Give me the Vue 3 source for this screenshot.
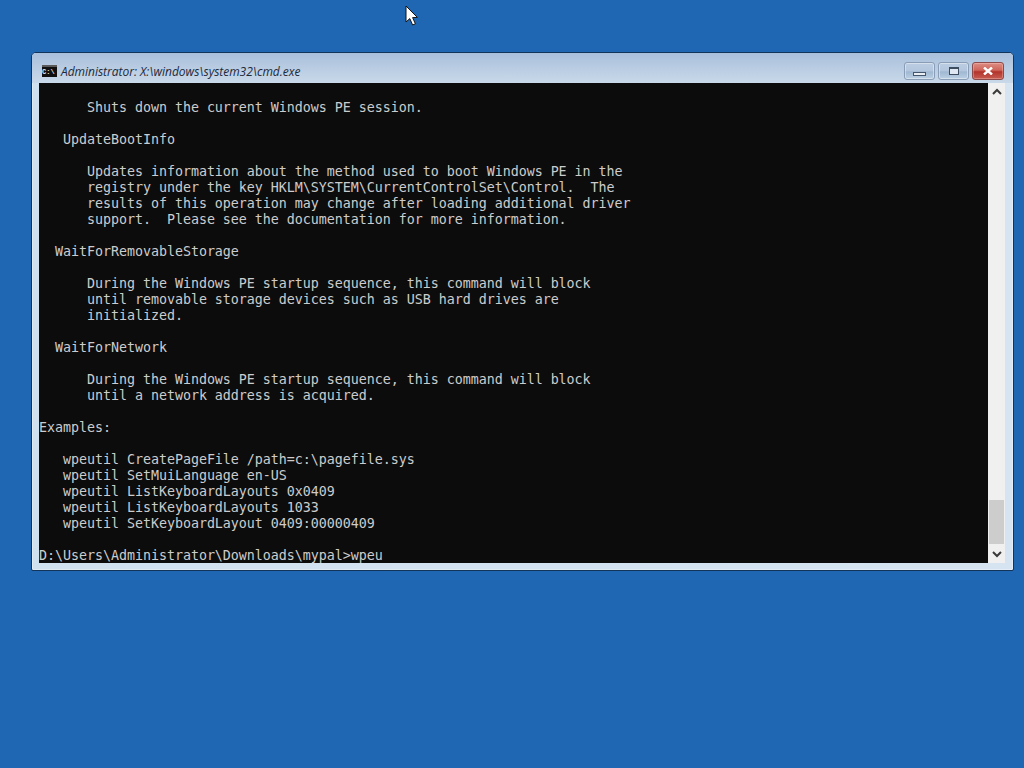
<script setup>
const lines = [
  '',
  '      Shuts down the current Windows PE session.',
  '',
  '   UpdateBootInfo',
  '',
  '      Updates information about the method used to boot Windows PE in the',
  '      registry under the key HKLM\\SYSTEM\\CurrentControlSet\\Control.  The',
  '      results of this operation may change after loading additional driver',
  '      support.  Please see the documentation for more information.',
  '',
  '  WaitForRemovableStorage',
  '',
  '      During the Windows PE startup sequence, this command will block',
  '      until removable storage devices such as USB hard drives are',
  '      initialized.',
  '',
  '  WaitForNetwork',
  '',
  '      During the Windows PE startup sequence, this command will block',
  '      until a network address is acquired.',
  '',
  'Examples:',
  '',
  '   wpeutil CreatePageFile /path=c:\\pagefile.sys',
  '   wpeutil SetMuiLanguage en-US',
  '   wpeutil ListKeyboardLayouts 0x0409',
  '   wpeutil ListKeyboardLayouts 1033',
  '   wpeutil SetKeyboardLayout 0409:00000409',
  '',
  'D:\\Users\\Administrator\\Downloads\\mypal>wpeu',
]
</script>

<template>
  <div class="desktop">
    <svg class="cursor" width="14" height="22" viewBox="0 0 14 22">
      <path d="M1 1 L1 17 L4.8 13.6 L7.6 20 L10.4 18.8 L7.6 12.6 L12.4 12.4 Z" fill="#fff" stroke="#10151c" stroke-width="1" />
    </svg>
    <section class="window">
      <header class="titlebar">
        <div class="appicon">C:\</div>
        <div class="title">Administrator: X:\windows\system32\cmd.exe</div>
        <div class="controls">
          <div class="btn min"><span class="glyph-min"></span></div>
          <div class="btn max"><span class="glyph-max"></span></div>
          <div class="btn close">
            <svg width="10" height="8" viewBox="0 0 10 8"><path d="M1 0.5 L9 7.5 M9 0.5 L1 7.5" stroke="#fff" stroke-width="2.4" /></svg>
          </div>
        </div>
      </header>
      <div class="client">
        <div class="console">
          <div v-for="(line, i) in lines" :key="i" class="row">{{ line }}</div>
        </div>
        <div class="scrollbar">
          <div class="arrow">
            <svg width="10" height="7" viewBox="0 0 10 7"><path d="M1 6 L5 2 L9 6" fill="none" stroke="#3a3a3a" stroke-width="2" /></svg>
          </div>
          <div class="track"><div class="thumb"></div></div>
          <div class="arrow">
            <svg width="10" height="7" viewBox="0 0 10 7"><path d="M1 1 L5 5 L9 1" fill="none" stroke="#3a3a3a" stroke-width="2" /></svg>
          </div>
        </div>
      </div>
    </section>
  </div>
</template>

<style>
html, body { margin: 0; background: #1f67b2; }
</style>

<style scoped>
.desktop {
  position: relative;
  width: 1024px;
  height: 768px;
  overflow: hidden;
  background: #1f67b2;
}
.cursor {
  position: absolute;
  left: 405px;
  top: 5px;
}
.window {
  position: absolute;
  left: 31px;
  top: 52px;
  width: 981px;
  height: 517px;
  display: flex;
  flex-direction: column;
  border: 1px solid #12345a;
  border-radius: 5px 5px 2px 2px;
  background: linear-gradient(90deg, #cfe0ef 0%, #d6e4f1 100%);
  box-shadow: inset 0 0 0 1px rgba(255, 255, 255, 0.35);
}
.titlebar {
  height: 30px;
  display: flex;
  align-items: center;
  padding: 0 1px 0 10px;
  border-radius: 4px 4px 0 0;
  background: linear-gradient(#a9bfdc 0%, #b4c8e0 35%, #c9d9ea 100%);
}
.appicon {
  width: 15px;
  height: 10px;
  margin-right: 4px;
  margin-top: 6px;
  background: #101010;
  border-top: 2px solid #5a5a5a;
  color: #e8e8e8;
  font: 700 7px/10px "Liberation Mono", monospace;
  overflow: hidden;
  box-sizing: content-box;
}
.title {
  flex: 1;
  font: italic 12px "Open Sans", "Liberation Sans", sans-serif;
  color: #1c2a3a;
  letter-spacing: -0.02px;
  padding-top: 7px;
}
.controls {
  display: flex;
  gap: 3px;
  align-self: flex-start;
  margin-top: 9px;
  margin-right: 8px;
}
.btn {
  width: 29px;
  height: 16px;
  border: 1px solid #8a9db6;
  border-radius: 3px;
  display: flex;
  align-items: center;
  justify-content: center;
  background: linear-gradient(#bccde2 0%, #b3c6dd 50%, #9fb7d2 55%, #bcd0e4 100%);
  box-shadow: inset 0 0 0 1px rgba(255, 255, 255, 0.4);
}
.btn.close {
  width: 30px;
  border-color: #8c4a4a;
  background: linear-gradient(#dd8d84 0%, #cf6459 45%, #b3342c 55%, #c65d52 100%);
  box-shadow: inset 0 0 0 1px rgba(255, 210, 200, 0.35);
}
.glyph-min {
  width: 11px;
  height: 2px;
  margin-top: 6px;
  background: #e9eef5;
  border: 1px solid #45566c;
}
.glyph-max {
  width: 8px;
  height: 5px;
  border: 1px solid #3d4c60;
  border-top-width: 2px;
  background: #dfe8f2;
}
.client {
  display: flex;
  height: 480px;
  margin: 0 8px 0 7px;
}
.console {
  width: 949px;
  height: 480px;
  box-sizing: border-box;
  padding-top: 1px;
  background: #0c0c0c;
  color: #cccccc;
  font: 13.33px/16px "DejaVu Sans Mono", "Liberation Mono", monospace;
  letter-spacing: -0.03px;
  overflow: hidden;
}
.row {
  height: 16px;
  white-space: pre;
}
.scrollbar {
  width: 17px;
  height: 480px;
  display: flex;
  flex-direction: column;
  background: #f0f0f0;
}
.arrow {
  height: 17px;
  flex: none;
  display: flex;
  align-items: center;
  justify-content: center;
}
.track {
  flex: 1;
  display: flex;
  flex-direction: column;
  justify-content: flex-end;
  padding-bottom: 2px;
}
.thumb {
  height: 44px;
  margin: 0 1px;
  background: #cdcdcd;
}
</style>
